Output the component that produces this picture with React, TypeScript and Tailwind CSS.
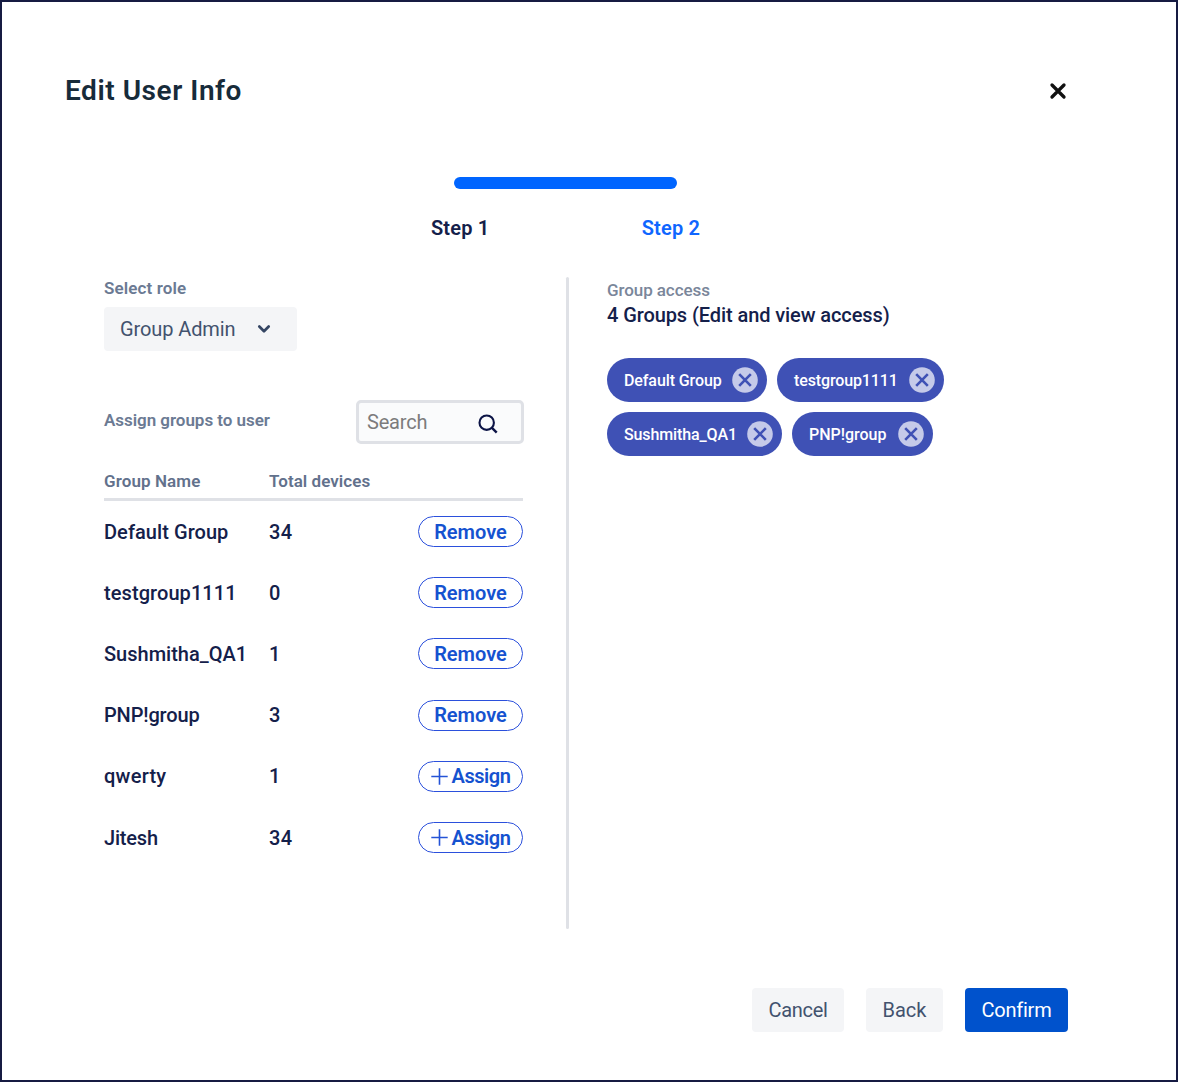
type Group = { name: string; spacing: string; devices: number; assigned: boolean };

const groups: Group[] = [
  { name: "Default Group", spacing: "tracking-[0.06px]", devices: 34, assigned: true },
  { name: "testgroup1111", spacing: "tracking-[0.08px]", devices: 0, assigned: true },
  { name: "Sushmitha_QA1", spacing: "tracking-[0px]", devices: 1, assigned: true },
  { name: "PNP!group", spacing: "tracking-[-0.15px]", devices: 3, assigned: true },
  { name: "qwerty", spacing: "tracking-[0.25px]", devices: 1, assigned: false },
  { name: "Jitesh", spacing: "tracking-[-0.2px]", devices: 34, assigned: false },
];

const chips = [
  { name: "Default Group", width: "w-[160px]", spacing: "tracking-[-0.1px]" },
  { name: "testgroup1111", width: "w-[167px]", spacing: "tracking-[-0.12px]" },
  { name: "Sushmitha_QA1", width: "w-[175px]", spacing: "tracking-[-0.12px]" },
  { name: "PNP!group", width: "w-[141px]", spacing: "tracking-[0px]" },
];

function Chip({ name, width, spacing }: (typeof chips)[number]) {
  return (
    <div className={`flex h-[44px] items-center justify-between rounded-full bg-[#3f51b5] pl-[17px] pr-[9px] ${width}`}>
      <span className={`pt-px text-[16px] font-medium text-white ${spacing}`}>{name}</span>
      <button aria-label={`Remove ${name}`} className="size-[26px]">
        <svg viewBox="0 0 26 26" className="size-[26px]">
          <circle cx="13" cy="13" r="12.8" fill="#c5cae9" />
          <path d="M7.2 7.2l11.6 11.6M18.8 7.2L7.2 18.8" stroke="#3f51b5" strokeWidth="2.6" />
        </svg>
      </button>
    </div>
  );
}

function ActionButton({ assigned }: { assigned: boolean }) {
  return (
    <button className="ml-auto flex h-[31px] w-[105px] items-center justify-center rounded-full border-[1.5px] border-[#2b50dc] text-[20px] font-semibold text-[#1552d0]">
      {assigned ? (
        <span className="tracking-[0px]">Remove</span>
      ) : (
        <>
          <svg viewBox="0 0 17 17" className="mr-[4px] size-[17px]">
            <path d="M8.5 0.3v16.4M0.3 8.5h16.4" stroke="#2453d6" strokeWidth="1.6" />
          </svg>
          <span className="tracking-[-0.45px]">Assign</span>
        </>
      )}
    </button>
  );
}

export default function App() {
  return (
    <div className="flex h-[1082px] w-[1178px] flex-col overflow-hidden whitespace-nowrap border-2 border-[#161b42] bg-white font-['Roboto',sans-serif] text-[#14204a]">
      <header className="flex items-center justify-between pl-[63px] pr-[109px] pt-[68px]">
        <h1 className="h-10 text-[28px] font-semibold leading-[41px] tracking-[0.55px] text-[#172b3a]">Edit User Info</h1>
        <button aria-label="Close" className="mt-[2px] size-[18px]">
          <svg viewBox="0 0 18 18" className="size-[18px]">
            <path d="M3 3l12 12M15 3L3 15" stroke="#111" strokeWidth="3.3" strokeLinecap="round" />
          </svg>
        </button>
      </header>

      <div className="ml-[429px] mt-[67px] w-[269px]">
        <div className="ml-[23px] h-[12px] w-[223px] rounded-full bg-[#0065ff]" />
        <div className="mt-[25px] flex justify-between text-[20px] font-semibold leading-[28px] tracking-[0.15px]">
          <span>Step 1</span>
          <span className="text-[#0f66ff]">Step 2</span>
        </div>
      </div>

      <main className="mt-[35px] flex h-[652px] pl-[102px]">
        <section className="w-[419px]">
          <div className="h-[30px] text-[17px] font-semibold leading-[22px] tracking-[0.13px] text-[#6b7a93]">Select role</div>
          <button className="flex h-[44px] w-[193px] items-center rounded-[4px] bg-[#f4f5f7] pl-4 text-[20px] tracking-[-0.1px] text-[#42526e]">
            Group Admin
            <svg viewBox="0 0 14 10" className="ml-[21px] h-[10px] w-[14px]">
              <path d="M2.3 2.5L7 7.2l4.7-4.7" fill="none" stroke="#344563" strokeWidth="2.7" strokeLinecap="round" strokeLinejoin="round" />
            </svg>
          </button>

          <div className="mt-[49px] flex h-[44px] w-[420px] items-center justify-between">
            <span className="pb-[3px] text-[17px] font-semibold tracking-[-0.04px] text-[#6b7a93]">Assign groups to user</span>
            <div className="flex h-[44px] w-[168px] items-center rounded-[5px] border-[3px] border-[#dfe1e6] bg-[#fafbfc] px-2">
              <input aria-label="Search groups" placeholder="Search" className="w-[111px] bg-transparent text-[20px] tracking-[-0.2px] outline-none placeholder:text-[#7c7c7c]" />
              <svg viewBox="0 0 20 20" className="mt-[3px] size-5 shrink-0">
                <circle cx="8.7" cy="8.7" r="7.2" fill="none" stroke="#0c1446" strokeWidth="2.1" />
                <path d="M13.7 13.7l5 5" stroke="#0c1446" strokeWidth="2.4" />
              </svg>
            </div>
          </div>

          <div className="mt-[25px] flex h-[32px] border-b-[3px] border-[#dfe1e6] text-[17px] font-semibold leading-[24px] text-[#62718c]">
            <span className="w-[165px] tracking-[0.1px]">Group Name</span>
            <span className="tracking-[0.05px]">Total devices</span>
          </div>
          {groups.map((g) => (
            <div key={g.name} className="flex h-[61.2px] items-center text-[20px] font-medium">
              <span className={`w-[165px] ${g.spacing}`}>{g.name}</span>
              <span className="tracking-[0.3px]">{g.devices}</span>
              <ActionButton assigned={g.assigned} />
            </div>
          ))}
        </section>

        <div className="ml-[43px] w-[3px] rounded-full bg-[#dfe1e6]" />

        <section className="ml-[38px] w-[350px]">
          <div className="h-[25px] text-[17px] font-medium leading-[26px] tracking-[-0.08px] text-[#7a869a]">Group access</div>
          <div className="h-[56px] text-[20px] font-medium leading-[26px] tracking-[-0.09px]">4 Groups (Edit and view access)</div>
          <div className="flex flex-wrap gap-[10px]">
            {chips.map((chip) => (
              <Chip key={chip.name} {...chip} />
            ))}
          </div>
        </section>
      </main>

      <footer className="ml-[750px] mt-[59px] flex gap-[22px] text-[20px] text-[#42526e]">
        <button className="h-[44px] w-[92px] rounded-[4px] bg-[#f4f5f7] tracking-[-0.3px]">Cancel</button>
        <button className="h-[44px] w-[77px] rounded-[4px] bg-[#f4f5f7] tracking-[0px]">Back</button>
        <button className="h-[44px] w-[103px] rounded-[4px] bg-[#0052cc] tracking-[-0.25px] text-white">Confirm</button>
      </footer>
    </div>
  );
}
